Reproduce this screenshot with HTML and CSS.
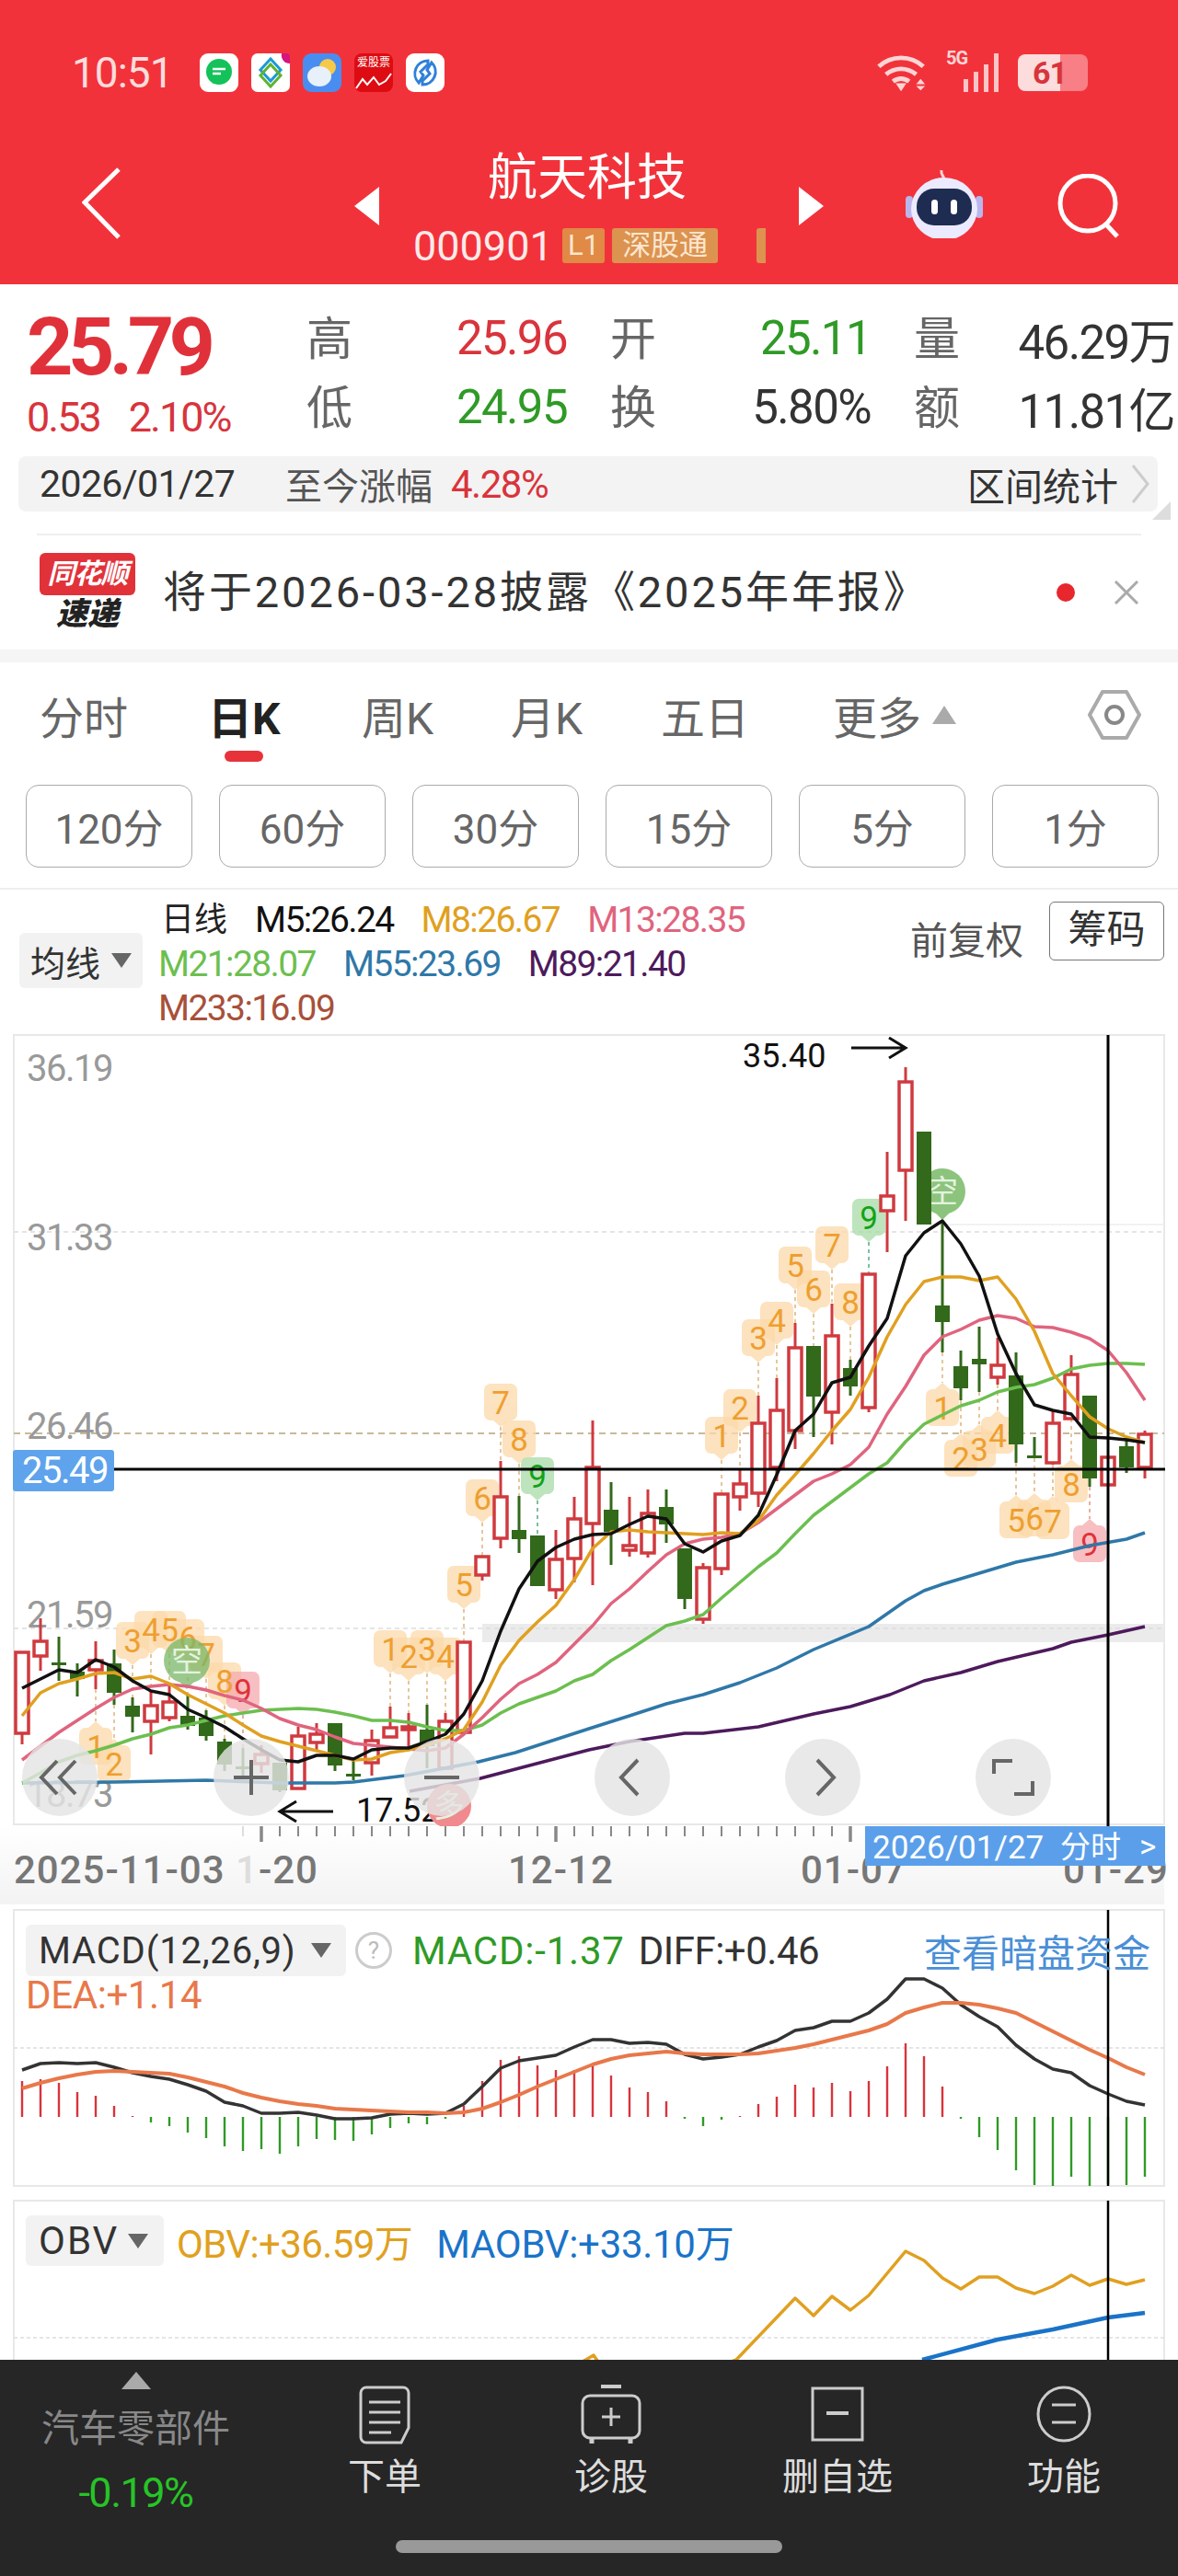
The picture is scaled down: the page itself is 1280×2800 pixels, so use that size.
FILE: index.html
```html
<!DOCTYPE html>
<html lang="zh-CN">
<head>
    <meta charset="UTF-8">
    <meta name="viewport" content="width=device-width, initial-scale=1.0">
    <title>航天科技</title>
    <link rel="stylesheet" href="styles.css">
</head>
<body>
    <header class="header">
        <div class="status-bar">
            <span class="clock">10:51</span>
            <div class="status-apps">
                <svg class="app-icon" viewBox="0 0 42 42"><rect width="42" height="42" rx="9" fill="#fff"/><circle cx="21" cy="20" r="14" fill="#14c25a"/><path d="M13 33l8-4 6 2z" fill="#14c25a"/><path d="M14 17h14M14 22h9" stroke="#fff" stroke-width="2.5"/></svg>
                <svg class="app-icon" viewBox="0 0 42 42"><rect width="42" height="42" rx="7" fill="#fff"/><path d="M21 6l11 12-11 12-11-12z" fill="none" stroke="#1a9ad6" stroke-width="3"/><path d="M21 12l11 12-11 12-11-12z" fill="none" stroke="#5fb233" stroke-width="3"/><path d="M33 0h5a4 4 0 0 1 4 4v7a9 9 0 0 1-9-11z" fill="#d6157f"/></svg>
                <svg class="app-icon" viewBox="0 0 42 42"><rect width="42" height="42" rx="9" fill="#4a8df0"/><circle cx="27" cy="15" r="9" fill="#f7c948"/><ellipse cx="18" cy="25" rx="13" ry="11" fill="#e8f0fa"/></svg>
                <div class="app-stock">
                    <span class="app-stock-name">爱股票</span>
                    <svg viewBox="0 0 42 20" class="app-stock-line"><polyline points="2,18 9,8 14,14 21,6 27,14 34,10 40,2" fill="none" stroke="#fff" stroke-width="2"/></svg>
                </div>
                <svg class="app-icon" viewBox="0 0 42 42"><rect width="42" height="42" rx="9" fill="#fff"/><path d="M24 8a14 14 0 0 0-10 24l5-8-3-4 8-8zM18 34a14 14 0 0 0 10-24l-5 8 3 4-8 8z" fill="none" stroke="#2f80d8" stroke-width="3"/></svg>
            </div>
            <div class="status-right">
                <svg class="wifi-icon" viewBox="0 0 60 44"><path d="M3 15a37 37 0 0 1 50 0M11 24a26 26 0 0 1 34 0M19 32a14 14 0 0 1 18 0" fill="none" stroke="#fbd5d6" stroke-width="5"/><path d="M22 34h12l-6 9z" fill="#fbd5d6"/><path d="M50 29l5 6h-10zM50 42l5-5h-10z" fill="#fbd5d6"/></svg>
                <div class="signal">
                    <span class="signal-label">5G</span>
                    <div class="signal-bars"><i class="bar-a"></i><i class="bar-b"></i><i class="bar-c"></i><i class="bar-d"></i></div>
                </div>
                <div class="battery"><span class="battery-level">61</span></div>
            </div>
        </div>
        <div class="nav">
            <svg class="nav-back" viewBox="0 0 42 78"><polyline points="40,2 3,38 40,76" fill="none" stroke="#fff" stroke-width="5"/></svg>
            <i class="arrow-left"></i>
            <div class="stock-title">
                <div class="stock-name">航天科技</div>
                <div class="stock-sub">
                    <span class="stock-code">000901</span>
                    <span class="stock-badge badge-level">L1</span>
                    <span class="stock-badge">深股通</span>
                    <span class="stock-badge badge-cut">融</span>
                </div>
            </div>
            <i class="arrow-right"></i>
            <svg class="nav-robot" viewBox="0 0 84 78">
                <path d="M42 14c-1-5-4-5-3-10" fill="none" stroke="#fbd5d6" stroke-width="3"/>
                <rect x="0" y="32" width="8" height="24" rx="4" fill="#b9b6ee"/>
                <rect x="76" y="32" width="8" height="24" rx="4" fill="#b9b6ee"/>
                <ellipse cx="42" cy="46" rx="36" ry="34" fill="#eceaff"/>
                <rect x="12" y="24" width="60" height="40" rx="19" fill="#1f2c52"/>
                <rect x="28" y="36" width="7" height="16" rx="3.5" fill="#fff"/>
                <rect x="49" y="36" width="7" height="16" rx="3.5" fill="#fff"/>
            </svg>
            <svg class="nav-search" viewBox="0 0 70 70"><circle cx="33" cy="32" r="30" fill="none" stroke="#fff" stroke-width="5"/><path d="M52 54l13 14" stroke="#fff" stroke-width="5"/></svg>
        </div>
    </header>

    <section class="quote">
        <div class="quote-main">
            <div class="price-box">
                <div class="price">25.79</div>
                <div class="price-change"><span>0.53</span><span>2.10%</span></div>
            </div>
            <div class="stats">
                <div class="stat"><span class="stat-label">高</span><span class="stat-value up">25.96</span></div>
                <div class="stat"><span class="stat-label">开</span><span class="stat-value down">25.11</span></div>
                <div class="stat"><span class="stat-label">量</span><span class="stat-value">46.29万</span></div>
                <div class="stat"><span class="stat-label">低</span><span class="stat-value down">24.95</span></div>
                <div class="stat"><span class="stat-label">换</span><span class="stat-value">5.80%</span></div>
                <div class="stat"><span class="stat-label">额</span><span class="stat-value">11.81亿</span></div>
            </div>
        </div>
        <div class="range-bar">
            <span class="range-date">2026/01/27</span>
            <span class="range-label">至今涨幅</span>
            <span class="range-pct">4.28%</span>
            <span class="range-link">区间统计</span>
            <svg class="range-arrow" viewBox="0 0 22 44"><polyline points="3,2 19,22 3,42" fill="none" stroke="#ccc" stroke-width="3"/></svg>
            <i class="range-corner"></i>
        </div>
        <div class="notice">
            <div class="notice-logo">
                <span class="notice-brand">同花顺</span>
                <span class="notice-sub">速递</span>
            </div>
            <div class="notice-text">将于2026-03-28披露《2025年年报》</div>
            <i class="notice-dot"></i>
            <svg class="notice-close" viewBox="0 0 28 26"><path d="M2 1l24 24M26 1L2 25" stroke="#aaa" stroke-width="3"/></svg>
        </div>
    </section>

    <div class="band"></div>

    <nav class="tabs">
        <span class="tab">分时</span>
        <span class="tab tab-active">日K</span>
        <span class="tab">周K</span>
        <span class="tab">月K</span>
        <span class="tab">五日</span>
        <span class="tab tab-more">更多<i class="more-arrow"></i></span>
        <svg class="tab-settings" viewBox="0 0 58 54"><path d="M16 2h26l14 25-14 25H16L2 27z" fill="none" stroke="#aaa" stroke-width="4" stroke-linejoin="round"/><circle cx="29" cy="27" r="9" fill="none" stroke="#888" stroke-width="4"/></svg>
    </nav>

    <div class="periods">
        <span class="period">120分</span>
        <span class="period">60分</span>
        <span class="period">30分</span>
        <span class="period">15分</span>
        <span class="period">5分</span>
        <span class="period">1分</span>
    </div>

    <section class="legend">
        <div class="pill pill-ma">均线<i class="pill-arrow"></i></div>
        <div class="legend-lines">
            <div class="legend-row"><span class="legend-name">日线</span><span class="c-m5">M5:26.24</span><span class="c-m8">M8:26.67</span><span class="c-m13">M13:28.35</span></div>
            <div class="legend-row"><span class="c-m21">M21:28.07</span><span class="c-m55">M55:23.69</span><span class="c-m89">M89:21.40</span></div>
            <div class="legend-row"><span class="c-m233">M233:16.09</span></div>
        </div>
        <span class="legend-adjust">前复权</span>
        <span class="legend-chip">筹码</span>
    </section>

    <svg id="mainChart" class="chart chart-main" viewBox="0 1120 1280 950"></svg>

    <section class="panel panel-macd">
        <svg id="macdChart" class="chart chart-macd" viewBox="0 2070 1280 315"></svg>
        <div class="panel-head">
            <div class="pill pill-macd">MACD(12,26,9)<i class="pill-arrow"></i></div>
            <span class="help-mark">?</span>
            <span class="macd-val">MACD:-1.37</span>
            <span class="diff-val">DIFF:+0.46</span>
            <span class="dark-link">查看暗盘资金</span>
        </div>
        <div class="dea-val">DEA:+1.14</div>
    </section>

    <section class="panel panel-obv">
        <svg id="obvChart" class="chart chart-obv" viewBox="0 2385 1280 180"></svg>
        <div class="panel-head head-obv">
            <div class="pill pill-obv">OBV<i class="pill-arrow"></i></div>
            <span class="obv-val">OBV:+36.59万</span>
            <span class="maobv-val">MAOBV:+33.10万</span>
        </div>
    </section>

    <footer class="footer">
        <div class="footer-main">
            <div class="sector">
                <i class="sector-arrow"></i>
                <span class="sector-name">汽车零部件</span>
                <span class="sector-pct">-0.19%</span>
            </div>
            <div class="action">
                <svg class="action-icon" viewBox="0 0 60 66"><path d="M10 3h40a6 6 0 0 1 6 6v38l-8 16H10a6 6 0 0 1-6-6V9a6 6 0 0 1 6-6z" fill="none" stroke="#ccc" stroke-width="3"/><path d="M13 19h34M13 30h34M13 41h34M13 52h24" stroke="#ccc" stroke-width="3"/></svg>
                <span class="action-label">下单</span>
            </div>
            <div class="action">
                <svg class="action-icon" viewBox="0 0 66 66"><path d="M22 2h22" stroke="#ccc" stroke-width="4"/><rect x="2" y="12" width="62" height="46" rx="8" fill="none" stroke="#ccc" stroke-width="3"/><path d="M33 25v20M23 35h20" stroke="#ccc" stroke-width="3"/><path d="M12 59v5M54 59v5" stroke="#ccc" stroke-width="5"/></svg>
                <span class="action-label">诊股</span>
            </div>
            <div class="action">
                <svg class="action-icon" viewBox="0 0 60 66"><rect x="3" y="4" width="54" height="56" fill="none" stroke="#ccc" stroke-width="3"/><path d="M18 31h24" stroke="#ccc" stroke-width="4"/></svg>
                <span class="action-label">删自选</span>
            </div>
            <div class="action">
                <svg class="action-icon" viewBox="0 0 62 66"><ellipse cx="31" cy="32" rx="28" ry="29" fill="none" stroke="#ccc" stroke-width="3"/><path d="M18 22h26M18 41h26" stroke="#ccc" stroke-width="3"/></svg>
                <span class="action-label">功能</span>
            </div>
        </div>
        <div class="home-bar"></div>
    </footer>

    <script src="chart.js"></script>
</body>
</html>
```

FILE: styles.css
```css
* {
    box-sizing: border-box;
}

body {
    margin: 0;
    width: 1280px;
    height: 2800px;
    overflow: hidden;
    background-color: #fff;
    font-family: Roboto, "Noto Sans CJK SC", sans-serif;
    color: #333;
}

i {
    display: block;
    flex: none;
}

/* header */
.header {
    height: 309px;
    background-color: #f2323a;
    color: #fff;
}

.status-bar {
    display: flex;
    align-items: center;
    height: 100px;
    padding: 58px 98px 0 78px;
}

.clock {
    width: 139px;
    font-size: 46px;
    letter-spacing: -1px;
    color: #fcdcdc;
}

.status-apps {
    display: flex;
    gap: 14px;
}

.app-icon {
    width: 42px;
    height: 42px;
}

.app-stock {
    width: 42px;
    height: 42px;
    border-radius: 8px;
    background-color: #dd0c12;
    overflow: hidden;
}

.app-stock-name {
    display: block;
    font-size: 12px;
    line-height: 20px;
    text-align: center;
    color: #fff;
}

.app-stock-line {
    display: block;
    width: 42px;
    height: 20px;
}

.status-right {
    display: flex;
    align-items: center;
    margin-left: auto;
}

.wifi-icon {
    width: 58px;
    height: 44px;
}

.signal {
    position: relative;
    width: 57px;
    height: 42px;
    margin-left: 18px;
}

.signal-label {
    position: absolute;
    left: 0;
    top: -7px;
    font-size: 20px;
    font-weight: 700;
    letter-spacing: -1px;
    color: #fbd5d6;
}

.signal-bars {
    display: flex;
    align-items: flex-end;
    justify-content: flex-end;
    gap: 6px;
    height: 42px;
}

.signal-bars i {
    width: 5px;
    background-color: #fbc5c7;
}

.bar-a { height: 14px; }
.bar-b { height: 22px; }
.bar-c { height: 30px; }
.bar-d { height: 42px; }

.battery {
    width: 76px;
    height: 40px;
    margin-left: 21px;
    border-radius: 8px;
    background: linear-gradient(90deg, #fcdcdc 0 61%, #f77f85 61% 100%);
}

.battery-level {
    display: block;
    padding-left: 16px;
    font-size: 34px;
    font-weight: 700;
    line-height: 40px;
    letter-spacing: -1px;
    color: #d8343c;
}

.nav {
    display: flex;
    align-items: flex-start;
    height: 209px;
}

.nav-back {
    width: 42px;
    height: 78px;
    margin: 82px 0 0 89px;
}

.arrow-left {
    margin: 103px 0 0 254px;
    border-style: solid;
    border-width: 21px 27px 21px 0;
    border-color: transparent #fff transparent transparent;
}

.arrow-right {
    margin-top: 103px;
    border-style: solid;
    border-width: 21px 0 21px 27px;
    border-color: transparent transparent transparent #fff;
}

.stock-title {
    width: 456px;
    padding-left: 37px;
}

.stock-name {
    margin: 59px 0 0 81px;
    font-size: 54px;
    line-height: 70px;
    white-space: nowrap;
}

.stock-sub {
    display: flex;
    align-items: center;
    width: 383px;
    height: 40px;
    margin-top: 18px;
    overflow: hidden;
}

.stock-code {
    width: 162px;
    font-size: 45px;
    letter-spacing: 0;
    color: #fdeaea;
    flex: none;
}

.stock-badge {
    flex: none;
    height: 38px;
    margin-right: 8px;
    padding: 0 11px;
    border-radius: 3px;
    background-color: #dc9350;
    font-size: 31px;
    line-height: 38px;
    color: #fbe6cf;
}

.badge-level {
    padding: 0 6px;
    background-color: #e08a45;
}

.badge-cut {
    margin-left: 34px;
}

.nav-robot {
    width: 84px;
    height: 78px;
    margin: 81px 0 0 89px;
}

.nav-search {
    width: 70px;
    height: 70px;
    margin: 89px 0 0 81px;
}

/* quote */
.quote-main {
    display: flex;
    height: 187px;
}

.price-box {
    width: 333px;
    padding: 28px 0 0 29px;
}

.price {
    font-size: 88px;
    font-weight: 700;
    line-height: 80px;
    letter-spacing: -5.6px;
    color: #e0313a;
}

.price-change {
    display: flex;
    gap: 31px;
    margin-top: 12px;
    font-size: 45px;
    line-height: 50px;
    letter-spacing: -2px;
    color: #d8343c;
}

.stats {
    display: grid;
    grid-template-columns: repeat(3, 283px);
    grid-auto-rows: 75px;
    column-gap: 47px;
    padding-top: 21px;
}

.stat {
    display: flex;
    justify-content: space-between;
    align-items: center;
}

.stat-label {
    margin-bottom: 7px;
    font-size: 50px;
    color: #666;
}

.stat-value {
    font-size: 51px;
    letter-spacing: -1.6px;
    white-space: nowrap;
    color: #333;
}

.up {
    color: #d9343c;
}

.down {
    color: #2f9a26;
}

.range-bar {
    position: relative;
    display: flex;
    align-items: center;
    width: 1238px;
    height: 60px;
    margin-left: 20px;
    padding-left: 23px;
    border-radius: 8px;
    background-color: #f3f3f3;
}

.range-date {
    width: 267px;
    font-size: 41px;
    letter-spacing: -0.6px;
}

.range-label {
    width: 180px;
    font-size: 40px;
    color: #555;
}

.range-pct {
    font-size: 42px;
    letter-spacing: -1.5px;
    color: #d9343c;
}

.range-link {
    margin-left: auto;
    font-size: 41px;
    color: #333;
}

.range-arrow {
    width: 22px;
    height: 44px;
    margin: 0 8px 0 13px;
}

.range-corner {
    position: absolute;
    right: -14px;
    bottom: -9px;
    border-style: solid;
    border-width: 0 0 20px 20px;
    border-color: transparent transparent #ddd transparent;
}

.notice {
    display: flex;
    align-items: center;
    height: 126px;
    margin: 24px 40px 0;
    padding-left: 3px;
    border-top: 2px solid #eee;
}

.notice-logo {
    display: flex;
    flex-direction: column;
    align-items: center;
    width: 104px;
}

.notice-brand {
    width: 100%;
    height: 46px;
    border-radius: 6px;
    background-color: #e1323a;
    font-size: 30px;
    font-weight: 700;
    font-style: italic;
    line-height: 46px;
    letter-spacing: -1px;
    text-align: center;
    color: #fff;
}

.notice-sub {
    font-size: 34px;
    font-weight: 900;
    font-style: italic;
    line-height: 40px;
    color: #222;
}

.notice-text {
    margin: 0 0 10px 30px;
    font-size: 47px;
    letter-spacing: 2.9px;
    white-space: nowrap;
    color: #333;
}

.notice-dot {
    width: 20px;
    height: 20px;
    margin-left: auto;
    border-radius: 50%;
    background-color: #e8262e;
}

.notice-close {
    width: 28px;
    height: 26px;
    margin-left: 42px;
    margin-right: 2px;
}

.band {
    height: 14px;
    background-color: #f5f5f5;
}

/* tabs */
.tabs {
    display: grid;
    grid-template-columns: 183px 167px 162px 163px 187px 277px 1fr;
    align-items: center;
    height: 133px;
    padding: 0 0 20px 43px;
}

.tab {
    position: relative;
    font-size: 48px;
    color: #666;
}

.tab-active {
    font-weight: 700;
    color: #222;
}

.tab-active::after {
    content: "";
    position: absolute;
    left: 18px;
    bottom: -16px;
    width: 42px;
    height: 12px;
    border-radius: 6px;
    background-color: #e8323a;
}

.tab-more {
    display: flex;
    align-items: center;
}

.more-arrow {
    margin-left: 12px;
    border-style: solid;
    border-width: 0 13px 20px 13px;
    border-color: transparent transparent #aaa transparent;
}

.tab-settings {
    width: 58px;
    height: 54px;
}

.periods {
    display: flex;
    gap: 29px;
    padding-left: 28px;
}

.period {
    display: flex;
    align-items: center;
    justify-content: center;
    width: 181px;
    height: 90px;
    border: 1px solid #aaa;
    border-radius: 14px;
    font-size: 44px;
    color: #666;
}

/* legend */
.legend {
    display: flex;
    align-items: flex-start;
    height: 155px;
    margin-top: 22px;
    border-top: 2px solid #eee;
}

.pill {
    display: flex;
    align-items: center;
    border-radius: 6px;
    background-color: #f2f2f2;
    font-size: 38px;
    color: #333;
}

.pill-arrow {
    border-style: solid;
    border-width: 16px 11px 0 11px;
    border-color: #666 transparent transparent transparent;
}

.pill-ma {
    gap: 12px;
    width: 134px;
    height: 60px;
    margin: 47px 0 0 21px;
    padding-left: 12px;
}

.legend-lines {
    margin: 9px 0 0 17px;
    font-size: 39px;
    letter-spacing: -1.6px;
}

.legend-row {
    display: flex;
    gap: 30px;
    height: 48px;
    line-height: 48px;
    white-space: nowrap;
}

.legend-name {
    margin-left: 3px;
    font-size: 36px;
    letter-spacing: 0;
    color: #222;
}

.c-m5 { color: #111; }
.c-m8 { color: #e0a020; }
.c-m13 { color: #e0647e; }
.c-m21 { color: #6cbf4f; }
.c-m55 { color: #2f78a8; }
.c-m89 { color: #4d1a5c; }
.c-m233 { color: #a8503a; }

.legend-adjust {
    margin: 22px 0 0 180px;
    font-size: 41px;
    color: #555;
}

.legend-chip {
    width: 125px;
    height: 64px;
    margin: 13px 0 0 28px;
    border: 1px solid #777;
    border-radius: 6px;
    font-size: 42px;
    line-height: 60px;
    text-align: center;
}

/* charts */
.chart {
    display: block;
    width: 1280px;
}

.chart-main {
    height: 950px;
}

.chart-macd {
    height: 315px;
}

.chart-obv {
    height: 180px;
}

.panel {
    position: relative;
}

.panel-head {
    position: absolute;
    left: 28px;
    top: 20px;
    right: 30px;
    display: flex;
    align-items: center;
    font-size: 42px;
    white-space: nowrap;
}

.pill-macd {
    gap: 16px;
    width: 348px;
    height: 56px;
    padding-left: 14px;
    font-size: 40px;
    letter-spacing: 0.8px;
}

.help-mark {
    width: 40px;
    height: 40px;
    margin-left: 10px;
    border: 3px solid #ccc;
    border-radius: 50%;
    font-size: 26px;
    line-height: 34px;
    text-align: center;
    color: #bbb;
}

.macd-val {
    margin-left: 22px;
    letter-spacing: 0.8px;
    color: #2f9a26;
}

.diff-val {
    margin-left: 15px;
    letter-spacing: -0.5px;
    color: #333;
}

.dark-link {
    margin-left: auto;
    font-size: 41px;
    color: #4a8fd6;
}

.dea-val {
    position: absolute;
    left: 28px;
    top: 74px;
    font-size: 42px;
    letter-spacing: -0.4px;
    color: #e8784a;
}

.head-obv {
    top: 20px;
}

.pill-obv {
    gap: 10px;
    width: 150px;
    height: 55px;
    padding-left: 14px;
    font-size: 42px;
    letter-spacing: 2px;
}

.obv-val {
    margin-left: 14px;
    letter-spacing: -0.6px;
    color: #e0a020;
}

.maobv-val {
    margin-left: 26px;
    letter-spacing: -0.3px;
    color: #1a73c8;
}

/* svg text */
.axis-label {
    font-size: 40px;
    letter-spacing: -1.5px;
    fill: #999;
}

.axis-tag {
    font-size: 40px;
    letter-spacing: -1.5px;
    fill: #fff;
}

.extreme-label {
    font-size: 36px;
    fill: #111;
}

.date-label {
    font-size: 42px;
    font-weight: 500;
    letter-spacing: 1px;
    fill: #777;
}

.date-faded {
    fill: #ddd;
}

.date-tag {
    font-size: 35px;
    fill: #fff;
}

.date-tag-cn {
    font-size: 33px;
    fill: #fff;
}

.pin-text {
    font-size: 35px;
    text-anchor: middle;
}

.pin-text-orange { fill: #ee9f2f; }
.pin-text-green { fill: #12a318; }
.pin-text-red { fill: #e0323a; }

.badge-text {
    font-size: 34px;
    text-anchor: middle;
    fill: #e4f3df;
}

/* footer */
.footer {
    height: 235px;
    background-color: #262626;
}

.footer-main {
    display: flex;
    height: 196px;
}

.sector {
    display: flex;
    flex-direction: column;
    align-items: center;
    width: 295px;
    padding-top: 13px;
}

.sector-arrow {
    border-style: solid;
    border-width: 0 16px 19px 16px;
    border-color: transparent transparent #aaa transparent;
}

.sector-name {
    margin-top: 18px;
    font-size: 41px;
    line-height: 50px;
    color: #888;
}

.sector-pct {
    margin-top: 20px;
    font-size: 45px;
    letter-spacing: -1.5px;
    line-height: 50px;
    color: #27c427;
}

.action {
    display: flex;
    flex-direction: column;
    align-items: center;
    width: 246px;
    padding-top: 27px;
}

.action-icon {
    height: 66px;
}

.action-label {
    margin-top: 10px;
    font-size: 40px;
    line-height: 50px;
    color: #ddd;
}

.home-bar {
    width: 420px;
    height: 14px;
    margin: 0 auto;
    border-radius: 7px;
    background-color: #999;
}
```

FILE: chart.js
```js
// [high, bodyTop, bodyBottom, low, colour]; index n sits at x = 24 + 20n
const candles = [
    [1796, 1796, 1884, 1896, 'r'], [1759, 1784, 1800, 1816, 'r'], [1779, 1807, 1809, 1827, 'g'], [1808, 1817, 1825, 1844, 'g'],
    [1784, 1805, 1815, 1836, 'r'], [1793, 1808, 1840, 1853, 'g'], [1845, 1854, 1866, 1883, 'g'], [1838, 1854, 1871, 1907, 'r'],
    [1833, 1850, 1867, 1871, 'r'], [1842, 1865, 1876, 1880, 'g'], [1859, 1867, 1887, 1892, 'g'], [1890, 1893, 1918, 1925, 'g'],
    [1900, 1920, 1923, 1933, 'g'], [1897, 1907, 1917, 1927, 'r'], [1916, 1916, 1946, 1948, 'g'], [1877, 1887, 1944, 1944, 'r'],
    [1873, 1885, 1894, 1903, 'r'], [1873, 1873, 1919, 1925, 'g'], [1910, 1928, 1929, 1935, 'g'], [1880, 1892, 1916, 1930, 'r'],
    [1855, 1878, 1888, 1888, 'r'], [1862, 1877, 1879, 1903, 'r'], [1853, 1880, 1898, 1922, 'g'], [1862, 1871, 1922, 1922, 'r'],
    [1785, 1785, 1883, 1883, 'r'], [1692, 1692, 1712, 1718, 'r'], [1588, 1627, 1672, 1683, 'r'], [1626, 1663, 1673, 1688, 'g'],
    [1669, 1669, 1724, 1724, 'g'], [1663, 1695, 1728, 1738, 'r'], [1627, 1651, 1694, 1720, 'r'], [1544, 1595, 1656, 1723, 'r'],
    [1611, 1641, 1665, 1701, 'g'], [1627, 1680, 1685, 1692, 'r'], [1619, 1645, 1688, 1693, 'r'], [1619, 1638, 1657, 1677, 'g'],
    [1683, 1683, 1738, 1749, 'g'], [1699, 1704, 1760, 1765, 'r'], [1624, 1624, 1705, 1712, 'r'], [1597, 1613, 1627, 1642, 'r'],
    [1517, 1547, 1623, 1638, 'r'], [1498, 1533, 1595, 1610, 'r'], [1438, 1465, 1555, 1575, 'r'], [1463, 1463, 1518, 1562, 'g'],
    [1417, 1452, 1535, 1570, 'r'], [1478, 1487, 1507, 1517, 'g'], [1385, 1385, 1530, 1535, 'r'], [1252, 1300, 1316, 1361, 'r'],
    [1160, 1176, 1272, 1327, 'r'], [1230, 1230, 1331, 1331, 'g'], [1327, 1419, 1437, 1470, 'g'], [1468, 1485, 1509, 1522, 'g'],
    [1442, 1477, 1483, 1513, 'g'], [1454, 1484, 1497, 1505, 'r'], [1470, 1495, 1570, 1590, 'g'], [1562, 1582, 1585, 1585, 'g'],
    [1532, 1547, 1590, 1592, 'r'], [1473, 1494, 1542, 1542, 'r'], [1517, 1517, 1607, 1616, 'g'], [1584, 1584, 1614, 1614, 'r'],
    [1562, 1572, 1595, 1601, 'g'], [1555, 1559, 1595, 1607, 'r']
];

const ma5 = [1835, 1825, 1815, 1818, 1804, 1812, 1827, 1838, 1842, 1858, 1867, 1877, 1890, 1902, 1913, 1915, 1908, 1908, 1912, 1902, 1900, 1900, 1893, 1885, 1863, 1827, 1773, 1727, 1697, 1682, 1673, 1668, 1667, 1657, 1648, 1651, 1678, 1687, 1675, 1669, 1647, 1603, 1555, 1537, 1503, 1497, 1463, 1433, 1365, 1340, 1327, 1352, 1387, 1450, 1493, 1527, 1533, 1537, 1562, 1563, 1565, 1568];
const ma8 = [1865, 1840, 1830, 1825, 1819, 1818, 1825, 1822, 1830, 1842, 1852, 1862, 1875, 1887, 1893, 1898, 1903, 1908, 1913, 1912, 1905, 1902, 1897, 1890, 1880, 1850, 1810, 1783, 1763, 1745, 1717, 1683, 1665, 1663, 1665, 1666, 1667, 1668, 1666, 1667, 1653, 1625, 1603, 1580, 1555, 1532, 1497, 1453, 1418, 1393, 1388, 1388, 1392, 1388, 1412, 1447, 1493, 1517, 1540, 1553, 1562, 1568];
const ma13 = [1913, 1898, 1883, 1870, 1857, 1845, 1836, 1833, 1831, 1833, 1837, 1843, 1848, 1857, 1868, 1875, 1880, 1888, 1895, 1897, 1899, 1901, 1903, 1900, 1885, 1867, 1847, 1830, 1820, 1807, 1787, 1767, 1743, 1727, 1708, 1690, 1678, 1673, 1671, 1667, 1655, 1640, 1625, 1610, 1602, 1592, 1573, 1537, 1507, 1473, 1453, 1445, 1435, 1430, 1433, 1442, 1443, 1448, 1455, 1468, 1492, 1522];
const ma21 = [1938, 1927, 1915, 1908, 1903, 1897, 1890, 1885, 1878, 1875, 1870, 1865, 1862, 1859, 1858, 1857, 1858, 1861, 1865, 1870, 1870, 1872, 1877, 1881, 1881, 1875, 1862, 1852, 1845, 1838, 1827, 1820, 1805, 1793, 1780, 1767, 1762, 1755, 1737, 1720, 1703, 1688, 1667, 1647, 1632, 1617, 1602, 1590, 1567, 1548, 1538, 1528, 1522, 1513, 1508, 1505, 1498, 1488, 1484, 1482, 1482, 1483];
const ma55 = '24,1938 126,1937 224,1935 304,1938 364,1938 384,1937 440,1930 520,1915 560,1905 640,1879 684,1865 724,1852 764,1842 804,1829 844,1813 884,1793 944,1768 984,1740 1004,1729 1024,1722 1064,1710 1104,1698 1144,1690 1184,1680 1224,1673 1244,1666';
const ma89 = '445,1947 522,1933 640,1902 684,1893 744,1884 764,1884 824,1877 884,1863 924,1855 967,1842 1004,1827 1044,1818 1084,1806 1144,1792 1164,1785 1204,1777 1244,1768';

// [candle index, centre y of the box, text, colour, 'd' tip down / 'u' tip up]
const pins = [
    [6, 1783, '3', 'orange', 'd'], [7, 1771, '4', 'orange', 'd'], [8, 1771, '5', 'orange', 'd'], [9, 1780, '6', 'orange', 'd'],
    [10, 1798, '7', 'orange', 'd'], [11, 1827, '8', 'orange', 'd'], [12, 1837, '9', 'red', 'd'],
    [4, 1898, '1', 'orange', 'u'], [5, 1917, '2', 'orange', 'u'],
    [20, 1792, '1', 'orange', 'd'], [21, 1800, '2', 'orange', 'd'], [22, 1792, '3', 'orange', 'd'], [23, 1800, '4', 'orange', 'd'],
    [24, 1722, '5', 'orange', 'd'], [25, 1628, '6', 'orange', 'd'], [26, 1524, '7', 'orange', 'd'], [27, 1564, '8', 'orange', 'd'],
    [28, 1604, '9', 'green', 'd'],
    [38, 1560, '1', 'orange', 'd'], [39, 1530, '2', 'orange', 'd'], [40, 1454, '3', 'orange', 'd'], [41, 1435, '4', 'orange', 'd'],
    [42, 1375, '5', 'orange', 'd'], [43, 1401, '6', 'orange', 'd'], [44, 1353, '7', 'orange', 'd'], [45, 1415, '8', 'orange', 'd'],
    [46, 1323, '9', 'green', 'd'],
    [50, 1530, '1', 'orange', 'u'], [51, 1585, '2', 'orange', 'u'], [52, 1575, '3', 'orange', 'u'], [53, 1560, '4', 'orange', 'u'],
    [54, 1652, '5', 'orange', 'u'], [55, 1650, '6', 'orange', 'u'], [56, 1653, '7', 'orange', 'u'], [57, 1613, '8', 'orange', 'u'],
    [58, 1678, '9', 'red', 'u']
];

const macdBars = [39, 41, 37, 27, 23, 12, 1, -6, -10, -17, -23, -32, -37, -35, -40, -32, -24, -25, -26, -19, -12, -7, -8, -2, 12, 39, 62, 66, 56, 51, 51, 56, 45, 32, 27, 17, -2, -10, -3, 1, 14, 22, 35, 32, 37, 28, 39, 55, 80, 66, 33, -2, -22, -36, -58, -74, -75, -65, -75, -73, -74, -65];
const diffLine = [2250, 2243, 2242, 2243, 2242, 2247, 2253, 2257, 2260, 2266, 2273, 2285, 2289, 2297, 2297, 2296, 2299, 2303, 2303, 2302, 2298, 2297, 2298, 2297, 2287, 2268, 2248, 2240, 2237, 2234, 2225, 2217, 2217, 2221, 2220, 2222, 2233, 2238, 2236, 2233, 2225, 2218, 2207, 2204, 2197, 2197, 2188, 2173, 2151, 2151, 2161, 2179, 2192, 2203, 2223, 2238, 2249, 2253, 2267, 2276, 2284, 2288];
const deaLine = [2270, 2264, 2259, 2255, 2252, 2251, 2252, 2253, 2254, 2258, 2263, 2268, 2275, 2280, 2284, 2287, 2289, 2292, 2293, 2294, 2295, 2296, 2296, 2297, 2296, 2292, 2285, 2277, 2268, 2260, 2252, 2244, 2238, 2234, 2232, 2230, 2232, 2233, 2233, 2233, 2232, 2229, 2226, 2222, 2217, 2212, 2207, 2200, 2188, 2182, 2177, 2177, 2179, 2183, 2188, 2198, 2208, 2218, 2228, 2237, 2247, 2255];

const obvLine = '560,2610 645,2560 680,2610 800,2565 864,2498 884,2517 904,2496 924,2511 944,2495 984,2447 1004,2457 1024,2476 1044,2488 1064,2475 1084,2475 1104,2487 1124,2493 1144,2485 1164,2473 1184,2484 1204,2477 1224,2483 1244,2478';
const maobvLine = '1002,2565 1084,2543 1144,2532 1204,2519 1244,2514';

const RED = '#cf3a3f';
const GREEN = '#33691a';
const CROSS_X = 1204;
const nx = n => 24 + 20 * n;
const series = ys => ys.map((y, n) => `${nx(n)},${y}`).join(' ');
const poly = (pts, color, w) => `<polyline points="${pts}" fill="none" stroke="${color}" stroke-width="${w}" stroke-linejoin="round"/>`;
const line = (x1, y1, x2, y2, color, w, dash) => `<line x1="${x1}" y1="${y1}" x2="${x2}" y2="${y2}" stroke="${color}" stroke-width="${w}"${dash ? ` stroke-dasharray="${dash}"` : ''}/>`;

function drawCandle(c, n) {
    const [high, top, bottom, low, kind] = c;
    const x = nx(n);
    const color = kind === 'r' ? RED : GREEN;
    let out = line(x, high, x, low, color, 3);
    if (kind === 'r') {
        out += `<rect x="${x - 7}" y="${top}" width="14" height="${Math.max(bottom - top, 3)}" fill="#fff" stroke="${color}" stroke-width="3.5"/>`;
    } else {
        out += `<rect x="${x - 8}" y="${top}" width="16" height="${Math.max(bottom - top, 3)}" fill="${color}"/>`;
    }
    return out;
}

const pinFill = { orange: '#fcd9a9', green: '#a7dba6', red: '#f6aaae' };
const stemColor = { orange: '#e6c79c', green: '#7fbfa0', red: '#e6b0a0' };

function drawPin([n, y, label, color, dir]) {
    const x = nx(n);
    const c = candles[n];
    const tipY = dir === 'd' ? y + 27 : y - 27;
    const stem = dir === 'd' ? line(x, tipY, x, c[0], stemColor[color], 2, '4 4') : line(x, c[3], x, tipY, stemColor[color], 2, '4 4');
    const edge = dir === 'd' ? y + 20 : y - 20;
    const box = `<rect x="${x - 18}" y="${y - 20}" width="36" height="40" rx="7" fill="${pinFill[color]}"/><path d="M${x - 8} ${edge}L${x} ${tipY}L${x + 8} ${edge}z" fill="${pinFill[color]}"/>`;
    return { stem, box: `<g opacity="0.75">${box}</g>`, text: `<text class="pin-text pin-text-${color}" x="${x}" y="${y + 13}">${label}</text>` };
}

function drawBadge(x, y, label, fill) {
    return `<circle cx="${x}" cy="${y}" r="25" fill="${fill}"/><path d="M${x - 9} ${y + 22}L${x} ${y + 31}L${x + 9} ${y + 22}z" fill="${fill}"/><text class="badge-text" x="${x}" y="${y + 12}">${label}</text>`;
}

function drawRoundButton(x, icon) {
    return `<ellipse cx="${x}" cy="1932" rx="41" ry="42" fill="#e4e4e4" opacity="0.82"/>${icon}`;
}

function drawMain() {
    let s = '';
    s += '<defs><linearGradient id="axisFade" x1="0" y1="0" x2="0" y2="1"><stop offset="0" stop-color="#fff"/><stop offset="1" stop-color="#f3f3f3"/></linearGradient></defs>';
    s += '<rect x="15" y="1125" width="1250" height="858" fill="#fff" stroke="#e8e8e8" stroke-width="2"/>';
    s += '<rect x="524" y="1765" width="741" height="20" fill="#ebebeb"/>';
    s += line(15, 1339, 1265, 1339, '#ddd', 1.5, '5 4');
    s += line(1024, 1331, 1265, 1331, '#eee', 1.5);
    s += line(15, 1558, 1265, 1558, '#c9b99a', 2, '7 5');
    s += line(15, 1770, 1265, 1770, '#ddd', 1.5, '5 4');

    s += '<text class="axis-label" x="29" y="1175">36.19</text>';
    s += '<text class="axis-label" x="29" y="1359">31.33</text>';
    s += '<text class="axis-label" x="29" y="1564">26.46</text>';
    s += '<text class="axis-label" x="29" y="1769">21.59</text>';
    s += '<text class="axis-label" x="29" y="1964">18.73</text>';

    const drawn = pins.map(drawPin);
    s += drawn.map(p => p.stem).join('');
    s += drawn.map(p => p.box).join('');
    s += drawn.map(p => p.text).join('');
    s += '<g opacity="0.75">' + drawBadge(203, 1805, '', '#7ab867') + '</g><text class="badge-text" x="203" y="1817">空</text>';
    s += drawBadge(1024, 1295, '空', '#8cc47e');
    s += candles.map(drawCandle).join('');

    s += poly(ma89, '#4d1a5c', 3.5);
    s += poly(ma55, '#2f78a8', 3.5);
    s += poly(series(ma21), '#6cbf4f', 3.5);
    s += poly(series(ma13), '#e0647e', 3.5);
    s += poly(series(ma8), '#e0a020', 3.5);
    s += poly(series(ma5), '#111', 3.5);

    s += '<text class="extreme-label" x="807" y="1160">35.40</text>';
    s += '<path d="M925 1139h58M966 1128l18 11-18 11" fill="none" stroke="#111" stroke-width="3"/>';
    s += '<text class="extreme-label" x="387" y="1980">17.52</text>';
    s += '<path d="M362 1969h-57M322 1958l-18 11 18 11" fill="none" stroke="#111" stroke-width="3"/>';

    s += '<circle cx="488" cy="1963" r="24" fill="#f08a8e"/><text class="badge-text" x="488" y="1975">多</text>';

    const icon = d => `<path d="${d}" fill="none" stroke="#666" stroke-width="4"/>`;
    s += drawRoundButton(65, icon('M62 1914l-17 18 17 18M82 1914l-17 18 17 18'));
    s += drawRoundButton(273, icon('M254 1932h38M273 1913v38'));
    s += drawRoundButton(480, icon('M461 1932h38'));
    s += drawRoundButton(687, icon('M693 1913l-18 19 18 19'));
    s += drawRoundButton(894, icon('M888 1913l18 19-18 19'));
    s += drawRoundButton(1101, icon('M1080 1928v-14h20M1122 1936v14h-20'));

    s += '<rect x="0" y="1985" width="1265" height="85" fill="url(#axisFade)"/>';
    for (let n = 12; n < 62; n++) {
        const major = n === 13 || n === 29 || n === 45;
        const faded = n === 12;
        s += line(nx(n), 1985, nx(n), major ? 2002 : 1996, faded ? '#ddd' : '#888', major ? 3.5 : 2);
    }

    s += '<text class="date-label" x="15" y="2047">2025-11-03</text>';
    s += '<text class="date-label" x="256" y="2047"><tspan class="date-faded">1</tspan>-20</text>';
    s += '<text class="date-label" x="552" y="2047">12-12</text>';
    s += '<text class="date-label" x="870" y="2047">01-07</text>';
    s += '<text class="date-label" x="1155" y="2047">01-29</text>';

    s += '<rect x="940" y="1985" width="326" height="43" fill="#5b9fea"/>';
    s += '<text class="date-tag" x="948" y="2020">2026/01/27</text><text class="date-tag-cn" x="1152" y="2019">分时</text><text class="date-tag" x="1238" y="2019">&gt;</text>';

    s += '<rect x="14" y="1576" width="110" height="45" rx="3" fill="#5ea3ec"/>';
    s += '<text class="axis-tag" x="24" y="1612">25.49</text>';
    s += line(124, 1597, 1266, 1597, '#000', 3);
    s += line(CROSS_X, 1125, CROSS_X, 1985, '#000', 3);

    document.getElementById('mainChart').innerHTML = s;
}

function drawMacd() {
    let s = '<rect x="15" y="2076" width="1250" height="300" fill="#fff" stroke="#e8e8e8" stroke-width="2"/>';
    s += line(15, 2226, 1265, 2226, '#ddd', 1.5, '4 3');
    macdBars.forEach((h, n) => {
        const color = h > 0 ? '#d8343c' : '#2f9a26';
        s += line(nx(n), 2301, nx(n), 2301 - h, color, 2.4);
    });
    s += poly(series(diffLine), '#333', 3.5);
    s += poly(series(deaLine), '#e8784a', 4);
    s += line(CROSS_X, 2076, CROSS_X, 2376, '#000', 2.5);
    document.getElementById('macdChart').innerHTML = s;
}

function drawObv() {
    let s = '<rect x="15" y="2392" width="1250" height="200" fill="#fff" stroke="#e8e8e8" stroke-width="2"/>';
    s += line(15, 2541, 1265, 2541, '#ddd', 1.5, '4 3');
    s += poly(obvLine, '#e0a020', 3.5);
    s += poly(maobvLine, '#1a73c8', 4.5);
    s += line(CROSS_X, 2392, CROSS_X, 2565, '#000', 2.5);
    document.getElementById('obvChart').innerHTML = s;
}

drawMain();
drawMacd();
drawObv();
```
